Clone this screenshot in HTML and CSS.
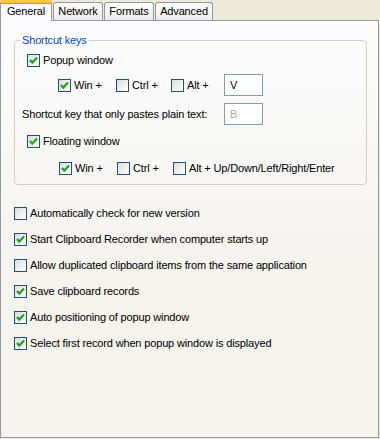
FILE: index.html
```html
<!DOCTYPE html>
<html lang="en">
<head>
    <meta charset="UTF-8">
    <title>Options</title>
    <link rel="stylesheet" href="styles.css">
</head>
<body>
    <div class="tabs">
        <div class="tab active tab-general">General</div>
        <div class="tab tab-network">Network</div>
        <div class="tab tab-formats">Formats</div>
        <div class="tab tab-advanced">Advanced</div>
    </div>

    <div class="panel">
        <fieldset class="group">
            <legend>Shortcut keys</legend>

            <div class="row row-popup">
                <span class="box on"><svg viewBox="0 0 11 11"><path d="M2 5 L4.3 7.6 L9 2.6" /></svg></span>
                <span>Popup window</span>
            </div>

            <div class="row row-keys">
                <div class="key key-win"><span class="box on"><svg viewBox="0 0 11 11"><path d="M2 5 L4.3 7.6 L9 2.6" /></svg></span><span>Win +</span></div>
                <div class="key key-ctrl"><span class="box"></span><span>Ctrl +</span></div>
                <div class="key key-alt"><span class="box"></span><span>Alt +</span></div>
                <div class="field">V</div>
            </div>

            <div class="row row-plain">
                <span class="plain-label">Shortcut key that only pastes plain text:</span>
                <div class="field disabled">B</div>
            </div>

            <div class="row row-floating">
                <span class="box on"><svg viewBox="0 0 11 11"><path d="M2 5 L4.3 7.6 L9 2.6" /></svg></span>
                <span>Floating window</span>
            </div>

            <div class="row row-keys2">
                <div class="key key-win2"><span class="box on"><svg viewBox="0 0 11 11"><path d="M2 5 L4.3 7.6 L9 2.6" /></svg></span><span>Win +</span></div>
                <div class="key key-ctrl2"><span class="box"></span><span>Ctrl +</span></div>
                <div class="key"><span class="box"></span><span>Alt + Up/Down/Left/Right/Enter</span></div>
            </div>
        </fieldset>

        <div class="options">
            <div class="row"><span class="box"></span><span>Automatically check for new version</span></div>
            <div class="row"><span class="box on"><svg viewBox="0 0 11 11"><path d="M2 5 L4.3 7.6 L9 2.6" /></svg></span><span>Start Clipboard Recorder when computer starts up</span></div>
            <div class="row"><span class="box"></span><span>Allow duplicated clipboard items from the same application</span></div>
            <div class="row"><span class="box on"><svg viewBox="0 0 11 11"><path d="M2 5 L4.3 7.6 L9 2.6" /></svg></span><span>Save clipboard records</span></div>
            <div class="row"><span class="box on"><svg viewBox="0 0 11 11"><path d="M2 5 L4.3 7.6 L9 2.6" /></svg></span><span>Auto positioning of popup window</span></div>
            <div class="row"><span class="box on"><svg viewBox="0 0 11 11"><path d="M2 5 L4.3 7.6 L9 2.6" /></svg></span><span>Select first record when popup window is displayed</span></div>
        </div>
    </div>
</body>
</html>
```

FILE: styles.css
```css
body {
    margin: 0;
    background-color: #ece9d8;
    font-family: "Liberation Sans", Arial, sans-serif;
    font-size: 11px;
    letter-spacing: -0.15px;
    color: #000;
}

/* tab strip */
.tabs {
    display: flex;
    align-items: flex-end;
    height: 20px;
}

.tab {
    box-sizing: border-box;
    height: 18px;
    line-height: 17px;
    text-align: center;
    border: 1px solid #919b9c;
    border-bottom: none;
    border-radius: 3px 3px 0 0;
    background: linear-gradient(#ffffff, #ecebe6);
    margin-left: 1px;
}

.tab.active {
    position: relative;
    z-index: 1;
    height: 21px;
    margin-left: 0;
    margin-bottom: -1px;
    line-height: 17px;
    background: #fcfcfe;
    border-top: 3px solid #ffc83c;
    box-shadow: inset 0 1px 0 #e68b2c;
}

.tab-general {
    width: 52px;
}

.tab-network {
    width: 50px;
}

.tab-formats {
    width: 50px;
}

.tab-advanced {
    width: 58px;
}

/* page */
.panel {
    box-sizing: border-box;
    width: 379px;
    height: 418px;
    border: 1px solid #919b9c;
    background: linear-gradient(#fcfcfe, #f4f3ee 60%, #f4f3ee);
    padding-top: 12px;
}

.group {
    box-sizing: border-box;
    width: 353px;
    margin: 0 0 0 13px;
    padding: 5px 0 8px 0;
    border: 1px solid #d0d0bf;
    border-radius: 4px;
}

.group legend {
    color: #0046d5;
    line-height: 14px;
    padding: 0 2px;
    margin-left: 5px;
}

.row {
    display: flex;
    align-items: center;
    gap: 3px;
    height: 16px;
    white-space: nowrap;
}

.row-popup {
    margin-left: 12px;
}

.row-keys {
    height: 22px;
    margin-top: 6px;
    margin-left: 43px;
    gap: 0;
}

.row-plain {
    height: 22px;
    margin-top: 7px;
    margin-left: 7px;
    gap: 0;
}

.plain-label {
    width: 202px;
}

.row-floating {
    margin-top: 8px;
    margin-left: 12px;
}

.row-keys2 {
    margin-top: 11px;
    margin-left: 44px;
    gap: 0;
}

.key {
    display: flex;
    align-items: center;
    gap: 3px;
}

.key-win {
    width: 58px;
}

.key-ctrl {
    width: 55px;
}

.key-alt {
    width: 53px;
}

.key-win2 {
    width: 58px;
}

.key-ctrl2 {
    width: 56px;
}

.field {
    box-sizing: border-box;
    width: 39px;
    height: 22px;
    border: 1px solid #7f9db9;
    background: #fff;
    padding: 3px 0 0 5px;
    line-height: 14px;
}

.field.disabled {
    color: #aca899;
}

/* checkbox */
.box {
    box-sizing: border-box;
    flex: none;
    width: 13px;
    height: 13px;
    border: 1px solid #1c5180;
    background: linear-gradient(135deg, #dcdcd7, #ffffff);
}

.box svg {
    display: block;
    width: 11px;
    height: 11px;
}

.box svg path {
    fill: none;
    stroke: #21a121;
    stroke-width: 2.2;
}

.options {
    display: flex;
    flex-direction: column;
    gap: 10px;
    margin: 20px 0 0 13px;
}
```
